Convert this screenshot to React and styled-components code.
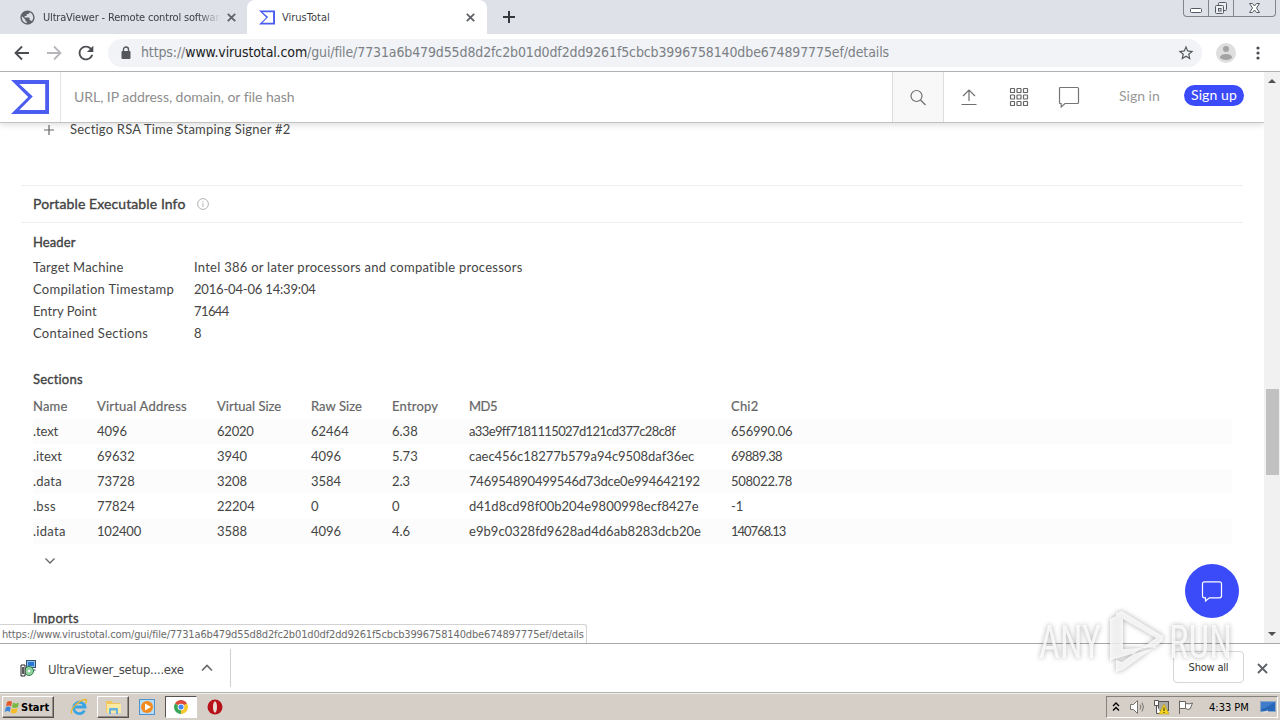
import styled, { createGlobalStyle, css } from "styled-components";
import { MdPublic, MdRefresh, MdStarBorder } from "react-icons/md";

const GlobalStyle = createGlobalStyle`
  * { box-sizing: border-box; }
  body {
    margin: 0;
    background: #fff;
    overflow: hidden;
  }
`;

const uiFont = css`
  font-family: "DejaVu Sans Condensed", "DejaVu Sans", sans-serif;
  font-stretch: condensed;
`;

const Screen = styled.div`
  width: 1280px;
  height: 720px;
  display: flex;
  flex-direction: column;
  position: relative;
  overflow: hidden;
  background: #fff;
  ${uiFont}
`;

const Text = styled.span`
  white-space: nowrap;
  letter-spacing: ${({ $ls }) => $ls || 0}px;
`;

/* ---------- tab strip ---------- */

const TabStrip = styled.div`
  height: 34px;
  background: #dee1e8;
  display: flex;
  flex: none;
`;

const Tab = styled.div`
  display: flex;
  align-items: center;
  height: 34px;
  width: ${({ $active }) => ($active ? 240 : 247)}px;
  padding: ${({ $active }) => ($active ? "0 12px" : "0 11px 0 19px")};
  background: ${({ $active }) => ($active ? "#fff" : "transparent")};
  border-radius: 8px 8px 0 0;
  font-size: 11px;
  color: #3c4043;
  gap: 7px;
`;

const TabTitle = styled(Text)`
  flex: 1;
  overflow: hidden;
  -webkit-mask-image: ${({ $fade }) =>
    $fade ? "linear-gradient(90deg, #000 155px, transparent 178px)" : "none"};
`;

const NewTab = styled.div`
  width: 44px;
  display: grid;
  place-items: center;
`;

const WindowButtons = styled.div`
  display: flex;
  margin-left: auto;
  margin-right: 4px;
  height: 17px;
  border: 1px solid #81858d;
  border-top: 0;
  border-radius: 0 0 4px 4px;
`;

const WindowButton = styled.div`
  width: ${({ $w }) => $w}px;
  display: grid;
  place-items: center;
  & + & { border-left: 1px solid #81858d; }
`;

/* ---------- toolbar ---------- */

const Toolbar = styled.div`
  height: 38px;
  flex: none;
  display: flex;
  align-items: center;
  padding: 0 12px 0 14px;
  border-bottom: 1px solid #aeb0b3;
`;

const NavIcons = styled.div`
  display: flex;
  align-items: center;
  gap: 16px;
  width: 94px;
  color: #4a4d51;
`;

const Reload = styled(MdRefresh)`
  flex: none;
  margin: 0 -3px;
`;

const Omnibox = styled.div`
  display: flex;
  align-items: center;
  width: 1094px;
  height: 28px;
  border-radius: 14px;
  background: #f1f3f6;
  padding: 0 7px 0 12px;
  margin-right: 14px;
  font-size: 14px;
  color: #7b8085;
  & > span { margin-left: 9px; flex: 1; padding-bottom: 1px; }
  & > svg { color: #54575b; flex: none; }
  b { font-weight: 400; color: #202124; }
`;

const MenuIcon = styled.svg`
  margin-left: 13px;
`;

/* ---------- page ---------- */

const Viewport = styled.div`
  height: 571px;
  flex: none;
  display: flex;
  position: relative;
`;

const Page = styled.main`
  flex: 1;
  overflow: hidden;
  font-family: Lato, sans-serif;
  font-stretch: normal;
  font-size: 13px;
  color: #454545;
`;

const SiteHeader = styled.header`
  height: 51px;
  display: flex;
  align-items: center;
  border-bottom: 1px solid #c2c2c2;
  box-shadow: 0 2px 6px rgba(0, 0, 0, 0.13);
`;

const LogoCell = styled.div`
  width: 61px;
  height: 50px;
  display: grid;
  place-items: center;
  border-right: 1px solid #e4e4e4;
`;

const SearchField = styled.div`
  width: 831px;
  padding: 0 0 2px 13px;
  font-size: 14px;
  color: #8e8e8e;
`;

const SearchButton = styled.div`
  width: 52px;
  height: 50px;
  display: grid;
  place-items: center;
  background: #f8f8f8;
  border: solid #dedede;
  border-width: 0 1px;
`;

const Actions = styled.div`
  display: flex;
  align-items: center;
  padding-left: 14px;
  gap: 28px;
`;

const SignIn = styled.div`
  width: 65px;
  margin-left: 39px;
  font-size: 14px;
  color: #999;
  padding-bottom: 4px;
`;

const SignUp = styled.div`
  width: 60px;
  height: 21px;
  border-radius: 11px;
  background: #3b4bfa;
  color: #fff;
  font-size: 14px;
  line-height: 20px;
  text-align: center;
  margin-bottom: 3px;
`;

const SignerRow = styled.div`
  height: 14px;
  line-height: 14px;
  display: flex;
  align-items: center;
  gap: 16px;
  padding-left: 44px;
  margin-bottom: 48px;
  & > span { padding-bottom: 2px; }
`;

const SectionHead = styled.div`
  height: 38px;
  margin: 0 21px;
  padding: 0 12px;
  display: flex;
  align-items: center;
  gap: 12px;
  border: solid #efefef;
  border-width: 1px 0;
  font-size: 14px;
  -webkit-text-stroke: 0.35px #404040;
  & > span { padding-bottom: 2px; }
`;

const Detail = styled.section`
  padding: 9px 32px 0 33px;
`;

const Title = styled.h3`
  height: 20px;
  line-height: 20px;
  margin: ${({ $top }) => $top || 0}px 0 ${({ $bottom }) => $bottom || 4}px;
  font-size: 13px;
  font-weight: 400;
  -webkit-text-stroke: 0.35px #404040;
`;

const Pair = styled.div`
  display: grid;
  grid-template-columns: 161px 1fr;
  height: 22px;
  line-height: 22px;
`;

const Row = styled.div`
  display: grid;
  grid-template-columns: 64px 120px 94px 81px 77px 262px 1fr;
  height: 25px;
  line-height: 25px;
  color: ${({ $head }) => ($head ? "#666" : "#454545")};
  -webkit-text-stroke: ${({ $head }) => ($head ? "0.2px #666" : "0")};
  background: ${({ $striped }) => ($striped ? "#fcfcfc" : "transparent")};
`;

const More = styled.div`
  height: 34px;
  padding-left: 11px;
  display: flex;
  align-items: center;
`;

const Scrollbar = styled.div`
  width: 16px;
  background: #f1f1f1;
  display: flex;
  flex-direction: column;
  align-items: center;
  padding: 6px 0 6px;
`;

const Thumb = styled.div`
  width: 13px;
  height: 86px;
  margin: 305px 0 auto;
  background: #c1c1c1;
`;

const ChatButton = styled.div`
  position: absolute;
  right: 41px;
  bottom: 25px;
  width: 54px;
  height: 54px;
  border-radius: 50%;
  background: #3b4bfa;
  display: grid;
  place-items: center;
`;

const StatusBubble = styled.div`
  position: absolute;
  left: 0;
  bottom: 0;
  width: 587px;
  height: 19px;
  line-height: 19px;
  padding-left: 2px;
  background: #fff;
  border: solid #d2d2d2;
  border-width: 1px 1px 0 0;
  border-radius: 0 3px 0 0;
  font-size: 11px;
  color: #6b6b6b;
`;

/* ---------- download shelf ---------- */

const Shelf = styled.div`
  height: 50px;
  flex: none;
  display: flex;
  align-items: center;
  border-top: 1px solid #a9a9a9;
  border-bottom: 1px solid #b5b3ae;
  padding-right: 12px;
`;

const Download = styled.div`
  width: 231px;
  height: 38px;
  display: flex;
  align-items: center;
  padding-left: 20px;
  border-right: 1px solid #cfcfcf;
  font-size: 13px;
  color: #4a4a4a;
  & > span { width: 153px; margin-left: 11px; padding-top: 3px; }
`;

const ShowAll = styled.div`
  width: 71px;
  height: 32px;
  margin: 0 13px 2px auto;
  border: 1px solid #d6d6d6;
  border-radius: 4px;
  display: grid;
  place-items: center;
  font-size: 11px;
  color: #333;
`;

/* ---------- taskbar ---------- */

const Taskbar = styled.div`
  height: 27px;
  flex: none;
  background: #d5cfc8;
  border-top: 1px solid #f1efeb;
  display: flex;
  align-items: center;
  padding: 0 2px;
  color: #000;
`;

const raised = css`
  border: 1px solid;
  border-color: #fff #56534f #56534f #fff;
  box-shadow: inset -1px -1px #918d87;
`;

const StartButton = styled.div`
  width: 52px;
  height: 22px;
  display: flex;
  align-items: center;
  gap: 1px;
  padding-left: 1px;
  margin-right: 9px;
  font-size: 11px;
  font-weight: 700;
  ${raised}
`;

const TaskItem = styled.div`
  width: 32px;
  height: 22px;
  margin-right: 2px;
  display: grid;
  place-items: center;
  ${({ $kind }) => $kind === "raised" && raised}
  ${({ $kind }) =>
    $kind === "pressed" &&
    css`
      background: #fff;
      border: 1px solid;
      border-color: #56534f #fff #fff #56534f;
    `}
`;

const Tray = styled.div`
  width: 172px;
  height: 22px;
  margin-left: auto;
  padding-left: 5px;
  display: flex;
  align-items: center;
  font-size: 11px;
  border: 1px solid;
  border-color: #85817b #fff #fff #85817b;
`;

const TrayIcon = styled.svg`
  margin-left: ${({ $gap }) => $gap}px;
`;

const Clock = styled(Text)`
  width: 51px;
  margin-left: 15px;
`;

/* ---------- watermark ---------- */

const Watermark = styled.div`
  position: absolute;
  left: 1037px;
  top: 608px;
  pointer-events: none;
  svg {
    display: block;
    overflow: visible;
    filter: drop-shadow(0 0 2.5px rgba(0, 0, 0, 0.4));
  }
`;

const Cross = ({ size = 9, color = "#5f6368", width = 1.8 }) => (
  <svg width={size} height={size} viewBox="0 0 9 9" stroke={color} strokeWidth={width}>
    <path d="M.8.8l7.4 7.4M8.2.8L.8 8.2" />
  </svg>
);

const Sigma = ({ width, height, cut = 10 }) => (
  <svg width={width} height={height} viewBox="0 0 100 89" fill="#4b5cf0">
    <path
      fillRule="evenodd"
      d={`M45.3 44.5L0 89h100V0H0zM${100 - cut} ${89 - cut}H22l35.2-35.5L22 ${cut}h${78 - cut}z`}
    />
  </svg>
);

const Bubble = ({ width = 22, height = 22, color = "#757575", d }) => (
  <svg width={width} height={height} viewBox="0 0 22 22" fill="none" stroke={color} strokeWidth="1.2">
    <path d={d} />
  </svg>
);

const UP_CHAT = "M3 1.5h16.5q1 0 1 1v14q0 1-1 1H7L3.2 21v-3.5H2.5q-1 0-1-1v-14q0-1 1-1z";
const FAB_CHAT = "M3.5 1.8h15q2 0 2 2v12q0 2-2 2H8.5l-4 3.2v-3.2h-1q-2 0-2-2v-12q0-2 2-2z";

const HASH = "7731a6b479d55d8d2fc2b01d0df2dd9261f5cbcb3996758140dbe674897775ef";

const header = [
  ["Target Machine", "Intel 386 or later processors and compatible processors"],
  ["Compilation Timestamp", "2016-04-06 14:39:04"],
  ["Entry Point", "71644"],
  ["Contained Sections", "8"],
];

const columns = ["Name", "Virtual Address", "Virtual Size", "Raw Size", "Entropy", "MD5", "Chi2"];

const sections = [
  [".text", "4096", "62020", "62464", "6.38", "a33e9ff7181115027d121cd377c28c8f", "656990.06"],
  [".itext", "69632", "3940", "4096", "5.73", "caec456c18277b579a94c9508daf36ec", "69889.38"],
  [".data", "73728", "3208", "3584", "2.3", "746954890499546d73dce0e994642192", "508022.78"],
  [".bss", "77824", "22204", "0", "0", "d41d8cd98f00b204e9800998ecf8427e", "-1"],
  [".idata", "102400", "3588", "4096", "4.6", "e9b9c0328fd9628ad4d6ab8283dcb20e", "140768.13"],
];

// Tracking for values that should run tighter or looser than the default.
const tracking = {
  "Intel 386 or later processors and compatible processors": 0.26,
  "Compilation Timestamp": 0.3,
  "2016-04-06 14:39:04": -0.18,
  "Entry Point": 0.02,
  "71644": -0.6,
  "Contained Sections": 0.28,
  "Virtual Size": 0,
  "Raw Size": 0.05,
  MD5: -0.5,
  ".text": -0.1,
  ".itext": 0.05,
  ".data": 0.2,
  ".bss": 0.3,
  ".idata": 0.3,
  "102400": -0.2,
  "62020": -0.2,
  a33e9ff7181115027d121cd377c28c8f: -0.62,
  caec456c18277b579a94c9508daf36ec: -0.04,
  "746954890499546d73dce0e994642192": -0.22,
  e9b9c0328fd9628ad4d6ab8283dcb20e: 0.06,
  "656990.06": -0.22,
  "69889.38": -0.6,
  "508022.78": -0.25,
  "140768.13": -1,
};

const Tabs = () => (
  <TabStrip>
    <Tab>
      <MdPublic size={17} color="#5f6368" />
      <TabTitle $fade $ls={-0.18}>UltraViewer - Remote control software</TabTitle>
      <Cross />
    </Tab>
    <Tab $active>
      <Sigma width={16} height={15} cut={12} />
      <TabTitle>VirusTotal</TabTitle>
      <Cross />
    </Tab>
    <NewTab>
      <svg width="12" height="12" stroke="#35373b" strokeWidth="2">
        <path d="M6 0v12M0 6h12" />
      </svg>
    </NewTab>
    <WindowButtons>
      <WindowButton $w={24}>
        <svg width="13" height="16" fill="#fff" stroke="#555962">
          <rect x=".5" y="8.500" width="11" height="4" rx="1" />
        </svg>
      </WindowButton>
      <WindowButton $w={25}>
        <svg width="14" height="16" fill="#eceef2" stroke="#555962">
          <rect x="4.500" y="2.500" width="8" height="8" rx="1" />
          <rect x="1.500" y="5.500" width="8" height="8" rx="1" />
          <rect x="4.500" y="8.500" width="2.500" height="2.500" />
        </svg>
      </WindowButton>
      <WindowButton $w={42}>
        <svg width="13" height="16" fill="#fff" stroke="#555962">
          <path d="M1.500 3.500h3l2 2.500 2-2.500h3L8.500 8l3 4.500h-3l-2-2.500-2 2.500h-3l3-4.500z" />
        </svg>
      </WindowButton>
    </WindowButtons>
  </TabStrip>
);

const AddressBar = () => (
  <Toolbar>
    <NavIcons>
      <svg width="16" height="16" fill="none" stroke="#4a4d51" strokeWidth="1.800">
        <path d="M15 8H2M8 1.500L1.500 8 8 14.500" />
      </svg>
      <svg width="16" height="16" fill="none" stroke="#b5b7ba" strokeWidth="1.800">
        <path d="M1 8h13M8 1.500L14.500 8 8 14.500" />
      </svg>
      <Reload size={22} />
    </NavIcons>
    <Omnibox>
      <svg width="12" height="14" viewBox="0 0 12 14">
        <rect x="1.500" y="5" width="9" height="8" rx="1" fill="#54575b" />
        <path d="M3.500 6V3.500a2.500 2.500 0 0 1 5 0V6" fill="none" stroke="#54575b" strokeWidth="1.400" />
      </svg>
      <Text $ls={-0.12}>
        https://<b>www.virustotal.com</b>/gui/file/{HASH}/details
      </Text>
      <MdStarBorder size={18} />
    </Omnibox>
    <svg width="20" height="20">
      <circle cx="10" cy="10" r="10" fill="#dedede" />
      <circle cx="10" cy="6" r="3" fill="#a3a3a3" />
      <ellipse cx="10" cy="14" rx="6" ry="3" fill="#a3a3a3" />
    </svg>
    <MenuIcon width="16" height="14" fill="#4a4d51">
      <circle cx="9" cy="2" r="1.600" />
      <circle cx="9" cy="7" r="1.600" />
      <circle cx="9" cy="12" r="1.600" />
    </MenuIcon>
  </Toolbar>
);

const VirusTotalHeader = () => (
  <SiteHeader>
    <LogoCell>
      <Sigma width={38} height={34} />
    </LogoCell>
    <SearchField>
      <Text $ls={-0.04}>URL, IP address, domain, or file hash</Text>
    </SearchField>
    <SearchButton>
      <svg width="18" height="18" fill="none" stroke="#6f6f6f" strokeWidth="1.200">
        <circle cx="7.500" cy="8" r="5.500" />
        <path d="M11.500 12l5 5" />
      </svg>
    </SearchButton>
    <Actions>
      <svg width="22" height="22" fill="none" stroke="#6f6f6f" strokeWidth="1.200">
        <path d="M3.500 18.500h15M11 15V4.500M5 10l6-6 6 6" />
      </svg>
      <svg width="22" height="22" fill="none" stroke="#666" strokeWidth="1.200">
        {[2.5, 9, 15.5].map((y) =>
          [2.5, 9, 15.5].map((x) => <rect key={`${x}-${y}`} x={x} y={y} width="4" height="4" rx=".6" />)
        )}
      </svg>
      <Bubble d={UP_CHAT} />
    </Actions>
    <SignIn>
      <Text>Sign in</Text>
    </SignIn>
    <SignUp>
      <Text $ls={0.1}>Sign up</Text>
    </SignUp>
  </SiteHeader>
);

const Details = () => (
  <>
    <SignerRow>
      <svg width="10" height="10" stroke="#666" strokeWidth="1.200">
        <path d="M5 0v10M0 5h10" />
      </svg>
      <Text $ls={0.2}>Sectigo RSA Time Stamping Signer #2</Text>
    </SignerRow>
    <SectionHead>
      <Text $ls={0.1}>Portable Executable Info</Text>
      <svg width="12" height="12" fill="none" stroke="#aaa" strokeWidth=".9">
        <circle cx="6" cy="6" r="5.400" />
        <path d="M6 5v4M6 3v1" />
      </svg>
    </SectionHead>
    <Detail>
      <Title>
        <Text $ls={0.1}>Header</Text>
      </Title>
      {header.map(([name, value]) => (
        <Pair key={name}>
          <Text $ls={tracking[name] ?? 0.2}>{name}</Text>
          <Text $ls={tracking[value] ?? 0.2}>{value}</Text>
        </Pair>
      ))}
      <Title $top={25} $bottom={5}>
        <Text $ls={0.2}>Sections</Text>
      </Title>
      <Row $head>
        {columns.map((name) => (
          <Text key={name} $ls={tracking[name] ?? 0.2}>{name}</Text>
        ))}
      </Row>
      {sections.map((row, i) => (
        <Row key={row[0]} $striped={i % 2 === 0}>
          {row.map((value, col) => (
            <Text key={col} $ls={tracking[value]}>{value}</Text>
          ))}
        </Row>
      ))}
      <More>
        <svg width="12" height="8" fill="none" stroke="#666" strokeWidth="1.300">
          <path d="M1.500 1.500L6 6l4.500-4.500" />
        </svg>
      </More>
      <Title $top={30}>
        <Text $ls={0.3}>Imports</Text>
      </Title>
    </Detail>
  </>
);

const DownloadShelf = () => (
  <Shelf>
    <Download>
      <svg width="17" height="17" viewBox="0 0 17 17">
        <rect x="6.500" y=".5" width="9" height="7" fill="#8fc1ee" stroke="#33516f" />
        <rect x="8" y="2" width="6" height="4" fill="#2a78d0" />
        <path d="M8 9h7l1 2H8z" fill="#9aa7b5" />
        <circle cx="9" cy="11" r="4.500" fill="#8fd29c" stroke="#2f7d4b" />
        <circle cx="9" cy="11" r="1.300" fill="#fff" />
        <path d="M1 5h4v11H1z" fill="#fff" stroke="#222" />
        <path d="M3 7v7" stroke="#222" strokeWidth="1.500" />
      </svg>
      <Text $ls={-0.27}>UltraViewer_setup....exe</Text>
      <svg width="12" height="8" fill="none" stroke="#6a6a6a" strokeWidth="1.700">
        <path d="M1 6.500l5-5 5 5" />
      </svg>
    </Download>
    <ShowAll>
      <Text $ls={-0.2}>Show all</Text>
    </ShowAll>
    <Cross size={11} width={1.5} />
  </Shelf>
);

const WindowsBar = () => (
  <Taskbar>
    <StartButton>
      <svg width="16" height="16" viewBox="0 0 16 16">
        <path d="M3 3q3-2 5 0L7 7.500q-2-2-5 0z" fill="#e4572b" />
        <path d="M9 3.500q3 2 6 0L14 8q-3 2-6 0z" fill="#79b943" />
        <path d="M1.700 8.500q3-2 5 0L5.700 13q-2-2-5 0z" fill="#3d86d8" />
        <path d="M7.700 9q3 2 6 0l-1 4.500q-3 2-6 0z" fill="#f6bd27" />
      </svg>
      <Text>Start</Text>
    </StartButton>
    <TaskItem>
      <svg width="18" height="18" viewBox="0 0 18 18" fill="none">
        <path d="M14.500 12.500A5.700 5.700 0 1 1 15 9H5" stroke="#38a4e4" strokeWidth="2.800" />
        <path d="M2 15.500C-1 12 9 2 15.500 1.500q2 .5 0 4" stroke="#eab72f" strokeWidth="1.400" />
      </svg>
    </TaskItem>
    <TaskItem $kind="raised">
      <svg width="17" height="16" viewBox="0 0 17 16">
        <path d="M1 2h6l1 2h7v10H1z" fill="#efc75c" />
        <path d="M2 5h14v9H2z" fill="#fae9a0" />
        <path d="M4 15v-5q0-1 1-1h7q1 0 1 1v5h-2v-3.500H6V15z" fill="#67b2df" />
      </svg>
    </TaskItem>
    <TaskItem>
      <svg width="16" height="16" viewBox="0 0 16 16">
        <rect x=".5" y=".5" width="15" height="15" fill="#b9dcf6" stroke="#4c93cf" />
        <circle cx="8" cy="8" r="6" fill="#f28a1d" />
        <path d="M6 4.500v7L12 8z" fill="#fff" />
      </svg>
    </TaskItem>
    <TaskItem $kind="pressed">
      <svg width="14" height="14" viewBox="0 0 14 14">
        <path d="M7 7L.94 3.500A7 7 0 0 1 13.060 3.500z" fill="#dd4b3e" />
        <path d="M7 7L.94 3.500A7 7 0 0 0 7 14z" fill="#3aa757" />
        <path d="M7 7h0l6.060-3.500A7 7 0 0 1 7 14z" fill="#f9c72e" />
        <circle cx="7" cy="7" r="3.300" fill="#fff" />
        <circle cx="7" cy="7" r="2.500" fill="#4285f4" />
      </svg>
    </TaskItem>
    <TaskItem>
      <svg width="16" height="16" viewBox="0 0 16 16">
        <ellipse cx="8" cy="8" rx="7.500" ry="7.500" fill="#b81219" />
        <ellipse cx="8" cy="8" rx="2" ry="5.800" fill="#e9dcd8" />
      </svg>
    </TaskItem>
    <Tray>
      <svg width="8" height="10" fill="none" stroke="#000" strokeWidth="1.400">
        <path d="M1 4l3-3 3 3M1 8.500l3-3 3 3" />
      </svg>
      <TrayIcon $gap={9} width="20" height="16" viewBox="0 0 20 16" fill="none" stroke="#77746f">
        <path d="M1.500 5.500h3l4-4v13l-4-4h-3z" fill="#fff" />
        <path d="M11 5.500q2 2.500 0 5M13 3.500q3 4.500 0 9" />
      </TrayIcon>
      <TrayIcon $gap={4} width="17" height="16" viewBox="0 0 17 16">
        <rect x="5.500" y="2.500" width="10" height="9" fill="#aaa9a5" stroke="#555" />
        <path d="M1.500 1.500h4v5h-4zM3.500 6.500v8h5" fill="#fff" stroke="#555" />
        <path d="M11 5l5 10H6z" fill="#f7d51d" stroke="#b99a10" strokeWidth=".6" />
        <path d="M11 8.500v3.500M11 13v1" stroke="#222" />
      </TrayIcon>
      <TrayIcon $gap={7} width="17" height="16" viewBox="0 0 17 16" fill="#fff" stroke="#6a6864">
        <path d="M2.500 15V1.500M2.500 2.500h6v7h-6M8.500 4.500q4 1 7-.5L13 10q-2 1-4.500-.5" />
      </TrayIcon>
      <Clock>4:33 PM</Clock>
      <svg width="16" height="14" viewBox="0 0 16 14">
        <rect x=".5" y="1.500" width="15" height="10" fill="#2866b9" stroke="#8aa4c6" />
        <path d="M1 2h14L5 8 1 9z" fill="#3f7dcb" />
        <path d="M3 13l5-2" stroke="#ddd" strokeWidth="1.500" />
      </svg>
    </Tray>
  </Taskbar>
);

const AnyRun = () => (
  <Watermark>
    <svg width="197" height="66" fill="#fff" fillOpacity=".8" fontFamily="Roboto, sans-serif" fontSize="46">
      <text x="2" y="50" textLength="62" lengthAdjust="spacingAndGlyphs">ANY</text>
      <text x="132" y="50" textLength="63" lengthAdjust="spacingAndGlyphs">RUN</text>
      <path
        d="M79 8l-6 3v42l6-3zM85 3l41 25v5L86 62l-7 2V52l6 2 34-24-33-19v30l36-2-38 10-5 2V5z"
        fillRule="evenodd"
      />
    </svg>
  </Watermark>
);

const App = () => {
  return (
    <>
      <GlobalStyle />
      <Screen>
        <Tabs />
        <AddressBar />
        <Viewport>
          <Page>
            <VirusTotalHeader />
            <Details />
          </Page>
          <Scrollbar>
            <svg width="8" height="6" fill="#505050">
              <path d="M0 5l4-4 4 4z" />
            </svg>
            <Thumb />
            <svg width="8" height="6" fill="#505050">
              <path d="M0 1l4 4 4-4z" />
            </svg>
          </Scrollbar>
          <ChatButton>
            <Bubble d={FAB_CHAT} color="#fff" />
          </ChatButton>
          <StatusBubble>
            <Text $ls={-0.15}>https://www.virustotal.com/gui/file/{HASH}/details</Text>
          </StatusBubble>
        </Viewport>
        <DownloadShelf />
        <WindowsBar />
        <AnyRun />
      </Screen>
    </>
  );
};

export default App;
